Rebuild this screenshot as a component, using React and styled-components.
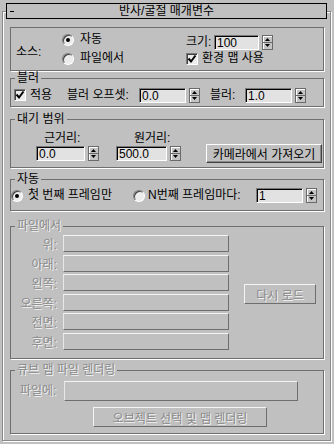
import React from "react";
import styled, { createGlobalStyle } from "styled-components";

const GlobalStyle = createGlobalStyle`
  html, body {
    margin: 0;
    padding: 0;
    background: #c0c0c0;
  }
  body {
    font-family: "Liberation Sans", "Noto Sans CJK KR", sans-serif;
    font-size: 12px;
    color: #000;
  }
`;

function SpinArrows() {
  return (
    <svg width="11" height="15" viewBox="0 0 11 15">
      <rect x="0.5" y="0.5" width="10" height="14" fill="#c4c4c4" stroke="#6a6a6a" />
      <path d="M1 1.5H10M1.5 1V14" stroke="#fff" />
      <line x1="1" y1="7.5" x2="10" y2="7.5" stroke="#6a6a6a" />
      <path d="M5.5 3L8 6H3Z" fill="#000" />
      <path d="M3 9H8L5.5 12Z" fill="#000" />
    </svg>
  );
}

function CheckMark() {
  return (
    <svg width="10" height="10" viewBox="0 0 10 10">
      <path d="M1.5 4.5L4 7.5L8.5 1.5" fill="none" stroke="#000" strokeWidth="2" />
    </svg>
  );
}

function Spinner({ value, width }) {
  return (
    <FieldRow>
      <NumberBox $w={width}>{value}</NumberBox>
      <SpinArrows />
    </FieldRow>
  );
}

function Radio({ on, children, gap }) {
  return (
    <Choice>
      <RadioDot $on={on} />
      <Text $ml={gap}>{children}</Text>
    </Choice>
  );
}

function App() {
  return (
    <>
      <GlobalStyle />
      <Panel>
        <Frame>
          <TitleBar>
            <Collapse />
            <Title>반사/굴절 매개변수</Title>
            <span />
          </TitleBar>

          <SourceBox>
            <SourceLabel>소스:</SourceLabel>
            <Radio on gap={6}>자동</Radio>
            <SizeRow>
              <Text $w={28}>크기:</Text>
              <Spinner value="100" width={45} />
            </SizeRow>
            <Radio gap={6}>파일에서</Radio>
            <Choice>
              <CheckBox>
                <CheckMark />
              </CheckBox>
              <Text $ml={4}>환경 맵 사용</Text>
            </Choice>
          </SourceBox>

          <Group $top={1}>
            <Legend>블러</Legend>
            <BlurRow>
              <CheckBox>
                <CheckMark />
              </CheckBox>
              <Text $ml={4} $w={37}>적용</Text>
              <Text $w={72}>블러 오프셋:</Text>
              <Spinner value="0.0" width={47} />
              <Text $ml={10} $w={35}>블러:</Text>
              <Spinner value="1.0" width={47} />
            </BlurRow>
          </Group>

          <Group $top={6}>
            <Legend>대기 범위</Legend>
            <RangeRow>
              <RangeColumn>
                <RangeLabel $pl={8}>근거리:</RangeLabel>
                <Spinner value="0.0" width={49} />
              </RangeColumn>
              <RangeColumn $ml={17}>
                <RangeLabel $pl={18}>원거리:</RangeLabel>
                <Spinner value="500.0" width={51} />
              </RangeColumn>
              <CameraButton>카메라에서 가져오기</CameraButton>
            </RangeRow>
          </Group>

          <Group $top={5}>
            <Legend>자동</Legend>
            <AutoRow>
              <RadioDot $on />
              <Text $ml={5} $w={105}>첫 번째 프레임만</Text>
              <RadioDot />
              <Text $ml={3} $w={108}>N번째 프레임마다:</Text>
              <Spinner value="1" width={47} />
            </AutoRow>
          </Group>

          <Group $top={9}>
            <Legend $disabled>파일에서</Legend>
            <FileBody>
              <FileGrid>
                {["위:", "아래:", "왼쪽:", "오른쪽:", "전면:", "후면:"].map((label) => (
                  <React.Fragment key={label}>
                    <FileLabel>{label}</FileLabel>
                    <BlankField />
                  </React.Fragment>
                ))}
              </FileGrid>
              <ReloadButton disabled>다시 로드</ReloadButton>
            </FileBody>
          </Group>

          <Group $top={5}>
            <Legend $disabled>큐브 맵 파일 렌더링</Legend>
            <CubeBody>
              <CubeRow>
                <Text $w={44} $disabled>
                  파일에:
                </Text>
                <BlankField $w={234} $h={20} />
              </CubeRow>
              <RenderButton disabled>오브젝트 선택 및 맵 렌더링</RenderButton>
            </CubeBody>
          </Group>
        </Frame>
      </Panel>
    </>
  );
}

const Panel = styled.div`
  width: 334px;
  height: 444px;
  box-sizing: border-box;
  padding: 11px 0 0 2px;
  background: #c0c0c0;
  overflow: hidden;
`;

const Frame = styled.div`
  box-sizing: border-box;
  width: 329px;
  height: 430px;
  border: 1px solid #8a8a8a;
  box-shadow: inset 1px 1px 0 #fff, 1px 1px 0 #fff;
  padding: 0 6px 0 7px;
`;

const TitleBar = styled.div`
  box-sizing: border-box;
  height: 16px;
  margin: -9px -3px 0 -4px;
  border: 1px solid #000;
  background: #c0c0c0;
  display: grid;
  grid-template-columns: 20px 1fr 20px;
  align-items: center;
  line-height: 14px;
`;

const Collapse = styled.span`
  width: 4px;
  height: 1px;
  margin-left: 3px;
  margin-top: 1px;
  background: #000;
`;

const Title = styled.span`
  text-align: center;
  white-space: nowrap;
`;

const Etched = `
  border: 1px solid #6f6f6f;
  box-shadow: 1px 1px 0 #fff;
`;

const SourceBox = styled.div`
  ${Etched}
  box-sizing: border-box;
  margin-top: 8px;
  height: 44px;
  padding-top: 2px;
  display: grid;
  grid-template-columns: 51px 124px 1fr;
  grid-template-rows: 19px 19px;
  align-items: center;
`;

const SourceLabel = styled.span`
  grid-row: 1 / span 2;
  padding-left: 5px;
  padding-top: 2px;
`;

const SizeRow = styled.div`
  display: flex;
  align-items: center;
  margin-top: 5px;
`;

const Group = styled.fieldset`
  ${Etched}
  margin: ${(p) => p.$top}px 0 0;
  padding: 0;
  min-width: 0;
`;

const Legend = styled.legend`
  margin-left: 4px;
  padding: 0 2px;
  line-height: 12px;
  font-size: 12px;
  color: ${(p) => (p.$disabled ? "#8a8a8a" : "#000")};
  text-shadow: ${(p) => (p.$disabled ? "1px 1px 0 #f4f4f4" : "none")};
`;

const Text = styled.span`
  display: inline-block;
  flex: none;
  white-space: nowrap;
  line-height: 15px;
  margin-left: ${(p) => p.$ml || 0}px;
  width: ${(p) => (p.$w ? `${p.$w}px` : "auto")};
  color: ${(p) => (p.$disabled ? "#8a8a8a" : "#000")};
  text-shadow: ${(p) => (p.$disabled ? "1px 1px 0 #f4f4f4" : "none")};
`;

const Choice = styled.label`
  display: flex;
  align-items: center;
`;

const RadioDot = styled.span`
  flex: none;
  box-sizing: border-box;
  width: 12px;
  height: 12px;
  border-radius: 50%;
  border: 1px solid;
  border-color: #7a7a7a #fff #fff #7a7a7a;
  box-shadow: inset 1px 1px 0 #404040;
  background: #ececec;
  display: flex;
  align-items: center;
  justify-content: center;
  &::after {
    content: "";
    display: ${(p) => (p.$on ? "block" : "none")};
    width: 4px;
    height: 4px;
    border-radius: 50%;
    background: #000;
  }
`;

const CheckBox = styled.span`
  flex: none;
  box-sizing: border-box;
  width: 12px;
  height: 12px;
  border: 1px solid;
  border-color: #7a7a7a #fff #fff #7a7a7a;
  box-shadow: inset 1px 1px 0 #404040;
  background: #ececec;
  display: flex;
  align-items: center;
  justify-content: center;
`;

const FieldRow = styled.div`
  display: flex;
  align-items: center;
  gap: 3px;
  flex: none;
`;

const NumberBox = styled.div`
  box-sizing: border-box;
  width: ${(p) => p.$w}px;
  height: 15px;
  padding-left: 2px;
  border: 1px solid;
  border-color: #7a7a7a #fff #fff #7a7a7a;
  box-shadow: inset 1px 1px 0 #000;
  background: #e2e2e2;
  font-family: "Liberation Sans", sans-serif;
  font-size: 12px;
  line-height: 14px;
`;

const BlurRow = styled.div`
  height: 22px;
  padding-left: 3px;
  display: flex;
  align-items: center;
`;

const RangeRow = styled.div`
  height: 42px;
  padding-left: 25px;
  display: flex;
  align-items: flex-start;
`;

const RangeColumn = styled.div`
  display: flex;
  flex-direction: column;
  gap: 1px;
  padding-top: 6px;
  margin-left: ${(p) => p.$ml || 0}px;
`;

const RangeLabel = styled.span`
  padding-left: ${(p) => p.$pl}px;
  line-height: 14px;
  height: 14px;
  white-space: nowrap;
`;

const RaisedButton = styled.button`
  box-sizing: border-box;
  flex: none;
  padding: 0;
  margin: 0;
  border: 1px solid;
  border-color: #fff #404040 #404040 #fff;
  box-shadow: inset -1px -1px 0 #8a8a8a;
  background: #c0c0c0;
  font-family: "Liberation Sans", "Noto Sans CJK KR", sans-serif;
  font-size: 12px;
  color: #000;
  white-space: nowrap;
  &:disabled {
    color: #8a8a8a;
    text-shadow: 1px 1px 0 #f4f4f4;
    border-color: #f4f4f4 #6e6e6e #6e6e6e #f4f4f4;
    box-shadow: none;
  }
`;

const CameraButton = styled(RaisedButton)`
  width: 116px;
  height: 19px;
  margin: 19px 1px 0 auto;
`;

const AutoRow = styled.div`
  height: 25px;
  box-sizing: border-box;
  padding-top: 3px;
  display: flex;
  align-items: flex-start;
  & > span:nth-of-type(odd) {
    margin-top: 2px;
  }
`;

const FileBody = styled.div`
  height: 126px;
  box-sizing: border-box;
  padding-top: 3px;
  display: flex;
  align-items: flex-start;
`;

const FileGrid = styled.div`
  display: grid;
  grid-template-columns: 46px 166px;
  grid-auto-rows: 17px;
  column-gap: 6px;
  row-gap: 2.6px;
  align-items: center;
`;

const FileLabel = styled.span`
  text-align: right;
  white-space: nowrap;
  color: #8a8a8a;
  text-shadow: 1px 1px 0 #f4f4f4;
`;

const BlankField = styled.div`
  box-sizing: border-box;
  width: ${(p) => (p.$w ? `${p.$w}px` : "100%")};
  height: ${(p) => p.$h || 17}px;
  border: 1px solid;
  border-color: #f4f4f4 #6e6e6e #6e6e6e #e8e8e8;
  background: #c0c0c0;
`;

const ReloadButton = styled(RaisedButton)`
  width: 72px;
  height: 20px;
  margin: 49px 0 0 15px;
`;

const CubeBody = styled.div`
  height: 57px;
  box-sizing: border-box;
  padding-top: 5px;
  display: flex;
  flex-direction: column;
  gap: 6px;
`;

const CubeRow = styled.div`
  display: flex;
  align-items: center;
  padding-left: 9px;
`;

const RenderButton = styled(RaisedButton)`
  width: 174px;
  height: 20px;
  margin-left: 82px;
`;

export default App;
